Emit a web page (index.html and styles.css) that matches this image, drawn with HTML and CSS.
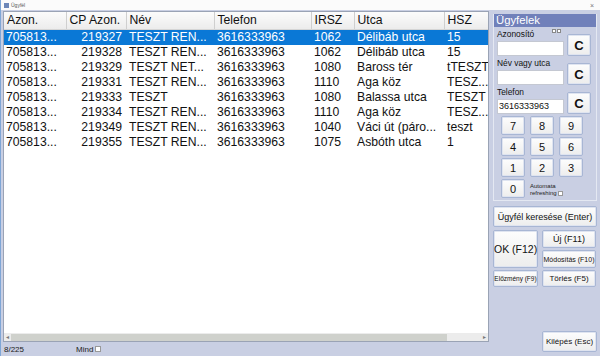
FILE: index.html
```html
<!DOCTYPE html>
<html lang="hu">
<head>
  <meta charset="UTF-8" />
  <title>Ügyfél</title>
  <link rel="stylesheet" href="styles.css">
</head>
<body>
  <div class="window">
    <div class="titlebar">
      <span class="app-icon"></span>
      <span class="title-text">Ügyfél</span>
      <span class="close-x">×</span>
    </div>

    <div class="content">
      <div class="left-col">
        <div class="grid-box">
          <div class="grid-scroll">
            <table class="grid">
              <colgroup>
                <col style="width:62px"><col style="width:60px"><col style="width:88px"><col style="width:97px">
                <col style="width:43px"><col style="width:90px"><col style="width:70px">
              </colgroup>
              <thead>
                <tr><th>Azon.</th><th>CP Azon.</th><th>Név</th><th>Telefon</th><th>IRSZ</th><th>Utca</th><th>HSZ</th></tr>
              </thead>
              <tbody>
                <tr class="selected"><td>705813...</td><td class="num">219327</td><td>TESZT REN...</td><td>3616333963</td><td>1062</td><td>Délibáb utca</td><td>15</td></tr>
                <tr><td>705813...</td><td class="num">219328</td><td>TESZT REN...</td><td>3616333963</td><td>1062</td><td>Délibáb utca</td><td>15</td></tr>
                <tr><td>705813...</td><td class="num">219329</td><td>TESZT NET...</td><td>3616333963</td><td>1080</td><td>Baross tér</td><td>tTESZT</td></tr>
                <tr><td>705813...</td><td class="num">219331</td><td>TESZT REN...</td><td>3616333963</td><td>1110</td><td>Aga köz</td><td>TESZ...</td></tr>
                <tr><td>705813...</td><td class="num">219333</td><td>TESZT</td><td>3616333963</td><td>1080</td><td>Balassa utca</td><td>TESZT</td></tr>
                <tr><td>705813...</td><td class="num">219334</td><td>TESZT REN...</td><td>3616333963</td><td>1110</td><td>Aga köz</td><td>TESZ...</td></tr>
                <tr><td>705813...</td><td class="num">219349</td><td>TESZT REN...</td><td>3616333963</td><td>1040</td><td>Váci út (páro...</td><td>teszt</td></tr>
                <tr><td>705813...</td><td class="num">219355</td><td>TESZT REN...</td><td>3616333963</td><td>1075</td><td>Asbóth utca</td><td>1</td></tr>
              </tbody>
            </table>
          </div>
          <div class="hscroll">
            <span class="arrow">◂</span>
            <span class="thumb"></span>
            <span class="arrow">▸</span>
          </div>
        </div>
        <div class="status">
          <span class="count">8/225</span>
          <span class="mind">Mind <span class="tiny-check"></span></span>
        </div>
      </div>

      <div class="right-col">
        <div class="group">
          <div class="group-head">Ügyfelek</div>

          <div class="field-row">
            <div class="field">
              <div class="field-label">Azonosító <span class="checks"><span class="tiny-check"></span><span class="tiny-check"></span></span></div>
              <div class="input"></div>
            </div>
            <button class="btn btn-c">C</button>
          </div>

          <div class="field-row">
            <div class="field">
              <div class="field-label">Név vagy utca</div>
              <div class="input"></div>
            </div>
            <button class="btn btn-c">C</button>
          </div>

          <div class="field-row">
            <div class="field">
              <div class="field-label">Telefon</div>
              <div class="input">3616333963</div>
            </div>
            <button class="btn btn-c">C</button>
          </div>

          <div class="numpad">
            <button class="btn key">7</button><button class="btn key">8</button><button class="btn key">9</button>
            <button class="btn key">4</button><button class="btn key">5</button><button class="btn key">6</button>
            <button class="btn key">1</button><button class="btn key">2</button><button class="btn key">3</button>
            <button class="btn key">0</button>
            <div class="auto-refresh">Automata<br>refreshing <span class="tiny-check"></span></div>
          </div>
        </div>

        <button class="btn btn-search">Ügyfél keresése (Enter)</button>

        <div class="actions">
          <button class="btn btn-ok">OK (F12)</button>
          <button class="btn btn-new">Új (F11)</button>
          <button class="btn btn-edit">Módosítás (F10)</button>
          <button class="btn btn-hist">Előzmény (F9)</button>
          <button class="btn btn-del">Törlés (F5)</button>
        </div>

        <div class="exit-row">
          <button class="btn btn-exit">Kilépés (Esc)</button>
        </div>
      </div>
    </div>
  </div>
</body>
</html>
```

FILE: styles.css
```css
body {
  margin: 0;
  padding: 0;
  font-family: "Liberation Sans", Arial, sans-serif;
  background: #c9cfe3;
  color: #111;
}

.window {
  width: 600px;
  height: 356px;
  display: flex;
  flex-direction: column;
  background: #c9cfe3;
  border-left: 1px solid #7fa6d6;
  box-sizing: border-box;
  overflow: hidden;
}

.titlebar {
  height: 10px;
  background: #fbfbfb;
  display: flex;
  align-items: center;
  gap: 2px;
  padding-left: 3px;
  font-size: 5px;
  color: #555;
}

.app-icon {
  width: 5px;
  height: 5px;
  background: #6d87b8;
}

.title-text {
  flex: 1;
}

.close-x {
  font-size: 7px;
  color: #777;
  margin-right: 6px;
}

.content {
  flex: 1;
  display: flex;
}

.left-col {
  width: 488px;
  display: flex;
  flex-direction: column;
  padding: 1px 0 0 2px;
  box-sizing: border-box;
}

.grid-box {
  height: 331px;
  background: #fff;
  border: 1px solid #9aa3b5;
  display: flex;
  flex-direction: column;
  overflow: hidden;
  box-sizing: border-box;
}

.grid-scroll {
  flex: 1;
  overflow: hidden;
}

.grid {
  border-collapse: collapse;
  table-layout: fixed;
  width: 510px;
  font-size: 12.2px;
}

.grid thead tr {
  height: 17px;
}

.grid th {
  background: linear-gradient(#fbfbfb, #ececec);
  border-right: 1px solid #cfcfcf;
  border-bottom: 1px solid #d5d5d5;
  font-weight: normal;
  text-align: left;
  padding: 0 3px;
  white-space: nowrap;
  overflow: hidden;
}

.grid td {
  height: 15px;
  padding: 0 3px;
  white-space: nowrap;
  overflow: hidden;
  line-height: 15px;
}

.grid td:first-child {
  padding-left: 2px;
}

.grid td.num {
  text-align: right;
  padding-right: 4px;
}

.grid tr.selected td {
  background: #0a78d6;
  color: #fff;
}

.hscroll {
  height: 8px;
  display: flex;
  align-items: center;
  background: #ececec;
}

.hscroll .arrow {
  width: 7px;
  font-size: 6px;
  color: #777;
  text-align: center;
  line-height: 8px;
}

.hscroll .thumb {
  width: 436px;
  height: 7px;
  background: #cfd1cc;
}

.hscroll .thumb + .arrow {
  margin-left: auto;
}

.status {
  flex: 1;
  display: flex;
  align-items: center;
  font-size: 8px;
  padding-left: 1px;
  color: #222;
}

.count {
  width: 72px;
}

.mind {
  display: flex;
  align-items: center;
  gap: 2px;
}

.tiny-check {
  display: inline-block;
  width: 4px;
  height: 4px;
  background: #fff;
  border: 1px solid #999;
  vertical-align: middle;
}

.right-col {
  flex: 1;
  display: flex;
  flex-direction: column;
  padding: 4px 3px 4px 4px;
  box-sizing: border-box;
}

.group {
  border: 1px solid #e4e8f2;
  border-top: none;
  padding-bottom: 2px;
}

.group-head {
  background: #7080ba;
  color: #fff;
  font-size: 11.3px;
  height: 13px;
  line-height: 13px;
  padding-left: 2px;
  margin-bottom: 2px;
}

.field-row {
  display: flex;
  align-items: flex-end;
  gap: 3px;
  padding: 0 0 2px 3px;
}

.field {
  width: 67px;
}

.field-label {
  font-size: 8.4px;
  height: 11px;
  line-height: 11px;
  display: flex;
  justify-content: space-between;
  white-space: nowrap;
  color: #111;
}

.checks {
  display: flex;
  gap: 1px;
  padding-right: 3px;
}

.checks .tiny-check {
  width: 2px;
  height: 2px;
  border-color: #888;
}

.input {
  height: 15px;
  background: #fff;
  border: 1px solid #c4c8d2;
  box-sizing: border-box;
  font-size: 9px;
  line-height: 13px;
  padding-left: 1px;
  margin-top: 1px;
}

.btn {
  font-family: "Liberation Sans", Arial, sans-serif;
  background: linear-gradient(#fdfdfd, #ededed);
  border: 1px solid #a8b6d4;
  border-radius: 2px;
  box-shadow: 0 0 0 1px #dfe4f0 inset;
  color: #111;
  padding: 0;
  white-space: nowrap;
  cursor: pointer;
}

.btn-c {
  width: 24px;
  height: 22px;
  font-size: 13px;
  font-weight: bold;
}

.numpad {
  display: grid;
  grid-template-columns: 24px 24px 24px;
  grid-auto-rows: 19px;
  column-gap: 5px;
  row-gap: 2px;
  padding: 0 0 0 7px;
}

.key {
  font-size: 11px;
}

.auto-refresh {
  grid-column: 2 / 4;
  font-size: 6px;
  line-height: 7px;
  padding-top: 4px;
  color: #222;
}

.auto-refresh .tiny-check {
  width: 3px;
  height: 3px;
}

.btn-search {
  margin-top: 5px;
  height: 21px;
  font-size: 9px;
}

.actions {
  display: grid;
  grid-template-columns: 45px 54px;
  grid-template-rows: 18px 18px 17px;
  column-gap: 4px;
  row-gap: 2px;
  margin-top: 3px;
}

.btn-ok {
  grid-row: 1 / 3;
  font-size: 10.5px;
}

.btn-new {
  font-size: 9px;
}

.btn-edit {
  font-size: 7px;
}

.btn-hist {
  font-size: 6.5px;
}

.btn-del {
  font-size: 8px;
}

.exit-row {
  flex: 1;
  display: flex;
  align-items: flex-end;
  justify-content: flex-end;
}

.btn-exit {
  width: 55px;
  height: 21px;
  font-size: 8px;
}
```
